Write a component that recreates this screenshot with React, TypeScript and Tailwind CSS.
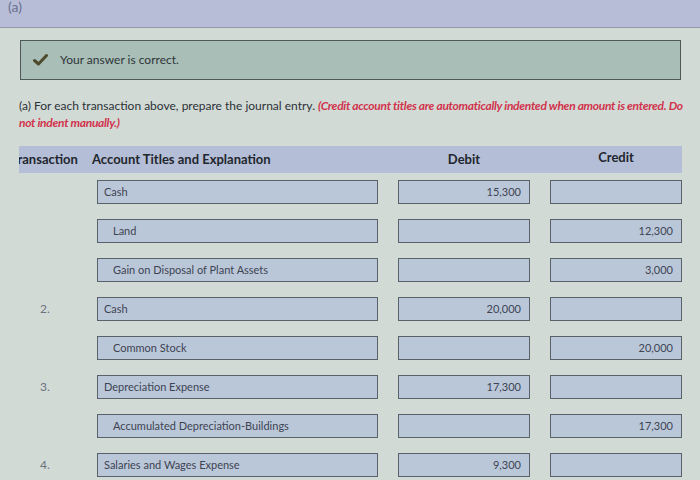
const rows = [
  { no: "", account: "Cash", indent: false, debit: "15,300", credit: "" },
  { no: "", account: "Land", indent: true, debit: "", credit: "12,300" },
  { no: "", account: "Gain on Disposal of Plant Assets", indent: true, debit: "", credit: "3,000" },
  { no: "2.", account: "Cash", indent: false, debit: "20,000", credit: "" },
  { no: "", account: "Common Stock", indent: true, debit: "", credit: "20,000" },
  { no: "3.", account: "Depreciation Expense", indent: false, debit: "17,300", credit: "" },
  { no: "", account: "Accumulated Depreciation-Buildings", indent: true, debit: "", credit: "17,300" },
  { no: "4.", account: "Salaries and Wages Expense", indent: false, debit: "9,300", credit: "" },
];

function Field({ value, align = "left", indent = false }: { value: string; align?: "left" | "right"; indent?: boolean }) {
  return (
    <div
      className={
        "flex h-[24px] items-center border-[1.5px] border-[#59616b] bg-[#bac7d9] text-[11px] text-[#3e4452] " +
        (align === "right" ? "justify-end pr-[8px]" : indent ? "pl-[15px]" : "pl-[6px]")
      }
    >
      {value}
    </div>
  );
}

export default function App() {
  return (
    <div className="h-[480px] w-[700px] overflow-hidden bg-[#d2dad6] font-['Lato','Noto_Sans',sans-serif]">
      <div className="h-[28px] border-b border-[#939aab] bg-[#b7bdd7] pl-[8px] text-[14px] leading-[14px] text-[#6a7090]">
        (a)
      </div>

      <div className="ml-[20px] mt-[12px] flex h-[40px] w-[661px] items-center border border-[#4f5957] bg-[#a8beb7] pl-[12px]">
        <svg width="15" height="12" viewBox="0 0 15 12">
          <path d="M1.5 6.5 L5.5 10 L13.5 1.5" fill="none" stroke="#4e4a2c" strokeWidth="3" strokeLinecap="round" strokeLinejoin="round" />
        </svg>
        <span className="ml-[12px] text-[12px] text-[#2f3438]">Your answer is correct.</span>
      </div>

      <div className="ml-[19px] mt-[17px] w-[670px] text-[12px] leading-[17px] text-[#2c3136]">
        (a) For each transaction above, prepare the journal entry.{" "}
        <span className="font-bold italic tracking-[-0.3px] text-[#d1334c]">
          (Credit account titles are automatically indented when amount is entered. Do not indent manually.)
        </span>
      </div>

      <div className="ml-[19px] mt-[15px] w-[663px] overflow-hidden">
        <div className="grid h-[27px] grid-cols-[78px_281px_20px_132px_20px_132px] items-center bg-[#b4bed6] text-[13px] font-bold text-[#22262e]">
          <div className="-ml-[8px]">Transaction</div>
          <div className="-ml-[5px]">Account Titles and Explanation</div>
          <div />
          <div className="text-center">Debit</div>
          <div />
          <div className="-mt-[4px] text-center">Credit</div>
        </div>

        <div className="mt-[7px] flex flex-col gap-[15px]">
          {rows.map((r, i) => (
            <div key={i} className="grid grid-cols-[78px_281px_20px_132px_20px_132px] items-center">
              <div className="pl-[21px] text-[12px] text-[#6c717c]">{r.no}</div>
              <Field value={r.account} indent={r.indent} />
              <div />
              <Field value={r.debit} align="right" />
              <div />
              <Field value={r.credit} align="right" />
            </div>
          ))}
        </div>
      </div>
    </div>
  );
}
